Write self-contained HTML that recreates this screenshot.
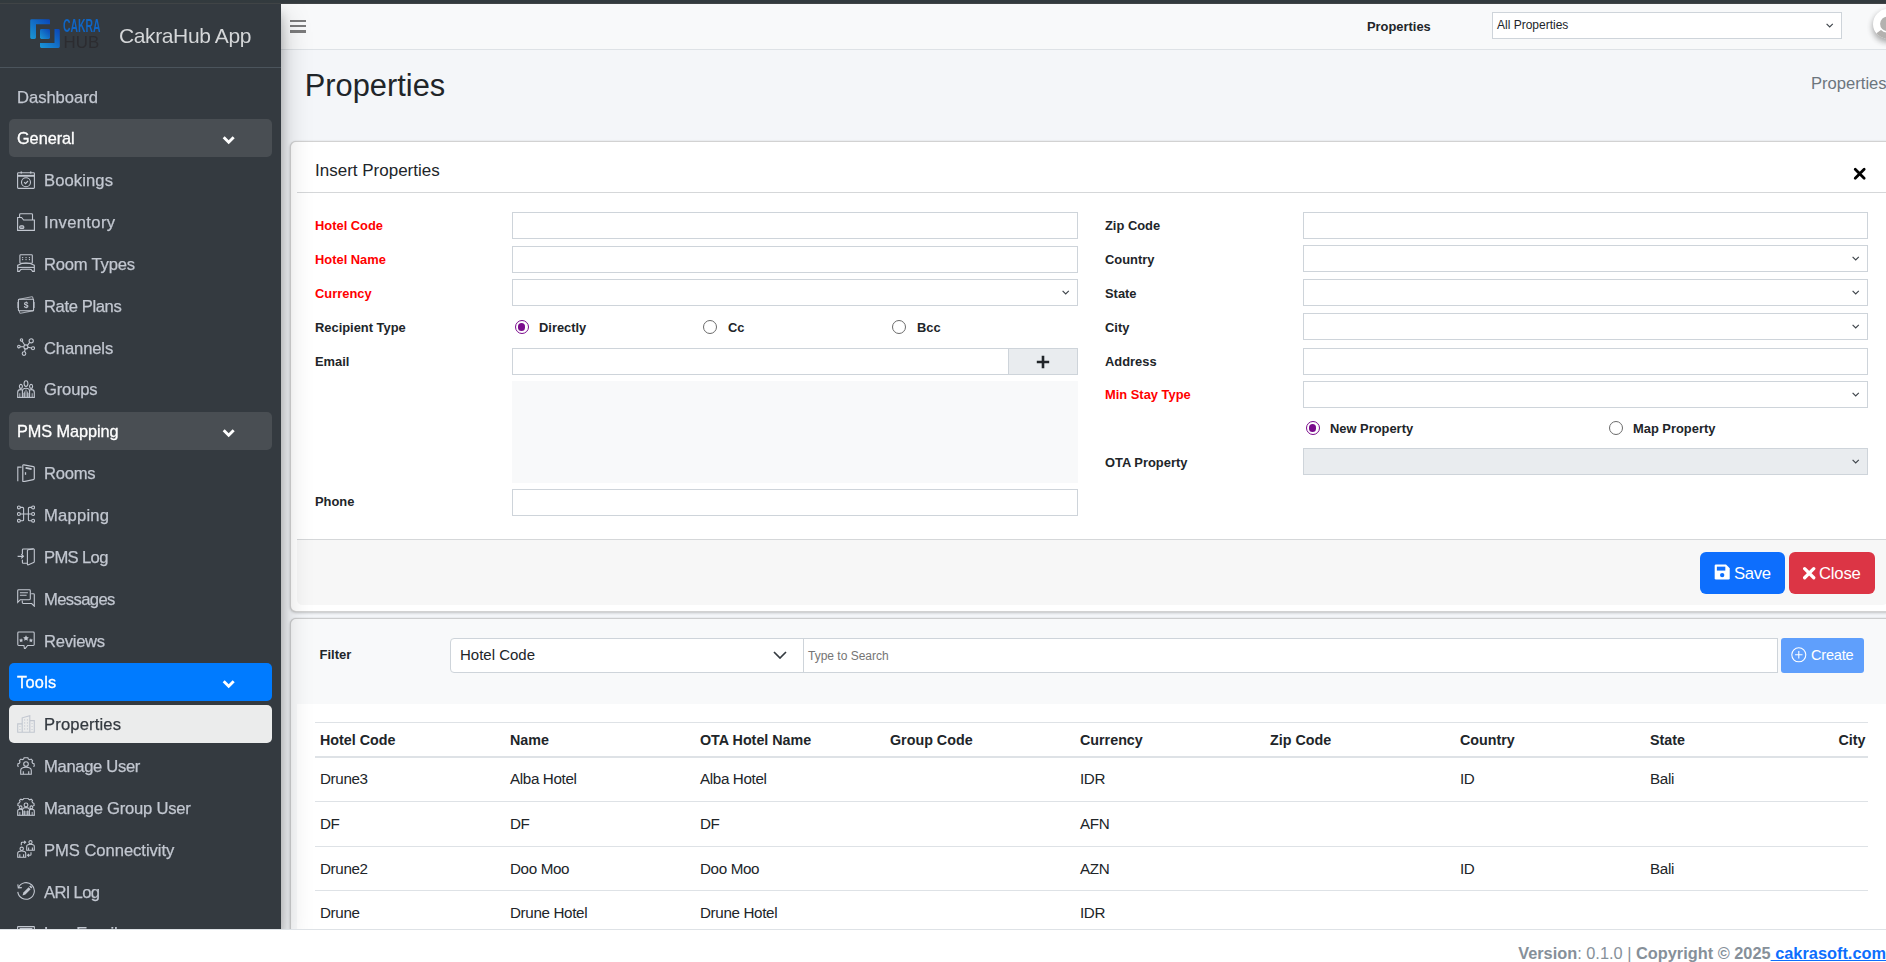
<!DOCTYPE html>
<html lang="en">
<head>
<meta charset="utf-8">
<title>CakraHub App - Properties</title>
<style>
*{box-sizing:border-box;margin:0;padding:0}
html,body{width:1886px;height:962px;overflow:hidden}
body{position:relative;background:#f4f6f9;font-family:"Liberation Sans",sans-serif;color:#212529;font-size:14.8px}
#wrap{position:absolute;left:0;top:0;width:1886px;height:962px;overflow:hidden;background:#f4f6f9}
.abs{position:absolute}
.topbar{position:absolute;left:0;top:0;width:1886px;height:4px;background:linear-gradient(#323a3e 0,#333a3e 65%,#474a4b 100%);z-index:50}
/* sidebar */
.sidebar{position:absolute;left:0;top:4px;width:281px;height:925px;background:#343a40;z-index:20;overflow:hidden;will-change:transform}
.sideshadow{position:absolute;left:0;top:4px;width:281px;height:925px;z-index:19;box-shadow:0 14px 28px rgba(0,0,0,.25),0 10px 10px rgba(0,0,0,.22)}
.brand{position:absolute;left:0;top:0;width:281px;height:64px;border-bottom:1px solid #4b545c}
.brand .logo{position:absolute;left:24px;top:6px}
.brand .txt{position:absolute;left:119px;top:20px;font-size:21px;line-height:24px;color:#d4d6d8;white-space:nowrap;font-weight:400;letter-spacing:-0.38px}
.nav a{position:absolute;left:9px;width:263px;height:37.85px;border-radius:5px;color:#c2c7d0;font-size:16.6px;line-height:37.85px;white-space:nowrap;text-decoration:none;display:block}
.nav a span{position:absolute;left:35px;top:1.4px;-webkit-text-stroke:0.25px currentColor}
.nav a.h span{left:8px;color:#fff;font-size:16.3px;-webkit-text-stroke:0.3px #fff}
.nav a.d span{left:8px}
.nav a.h{background:#494e53}
.nav a.t{background:#007bff}
.nav a.act{background:#ebecec;color:#343a40}
.nav a svg.ic{position:absolute;left:8px;top:10px;width:18px;height:18px;fill:none;stroke:#c2c7d0;stroke-width:1.1}
.nav a svg.ch{position:absolute;left:213.3px;top:15.8px;width:13.4px;height:10px}
/* navbar */
.navbar{position:absolute;left:281px;top:4px;width:1605px;height:46px;background:#f8f9fa;border-bottom:1px solid #dee2e6;z-index:5}
.lbl{position:absolute;font-weight:bold;font-size:12.9px;line-height:16px;margin-top:1px;white-space:nowrap;color:#212529}
.lbl.r{color:#ff0000}
.inp{position:absolute;height:27px;background:#fff;border:1px solid #ced4da}
.inp.dis{background:#e9ecef}
.inp svg{position:absolute;right:7.5px;top:10.2px;width:7.4px;height:5px}
.radio{position:absolute;width:14px;height:14px;border-radius:50%;border:1px solid #6b6b6b;background:#fff;margin:-0.7px 0 0 -0.9px}
.radio.on{border:1.7px solid #7a0a8c}
.radio.on:after{content:"";position:absolute;left:1.4px;top:1.4px;width:7.8px;height:7.8px;border-radius:50%;background:#7a0a8c}
/* cards */
.card1{position:absolute;left:290px;top:141px;width:1640px;height:471px;background:#fff;border:1px solid rgba(0,0,0,.175);border-radius:6px;box-shadow:0 0 1px rgba(0,0,0,.125),0 1px 3px rgba(0,0,0,.2)}
.card2{position:absolute;left:290px;top:618px;width:1640px;height:400px;background:#f8f9fa;border:1px solid rgba(0,0,0,.175);border-radius:6px;box-shadow:0 0 1px rgba(0,0,0,.125),0 1px 3px rgba(0,0,0,.2)}
.footer{position:absolute;left:0;top:929px;width:1886px;height:33px;background:#fff;border-top:1px solid #dee2e6;z-index:30;color:#869099;font-size:16.35px;line-height:20px;text-align:right;white-space:nowrap}
.footer .in{position:absolute;right:0;top:13px}
.footer a{color:#0d6efd;font-weight:bold;text-decoration:underline}
table{border-collapse:collapse}
.seltxt{position:absolute;left:4px;top:4px;font-size:12px;line-height:16px;color:#212529;white-space:nowrap}
.avatar{position:absolute;left:1592px;top:5px;width:30px;height:30px;border-radius:50%;background:#fff;box-shadow:0 3px 6px rgba(0,0,0,.16),0 3px 6px rgba(0,0,0,.23);overflow:hidden}
.avatar svg{position:absolute;left:0;top:0;width:30px;height:30px}
.ptitle{position:absolute;left:304.8px;top:68.4px;font-size:30.8px;line-height:36px;font-weight:normal;color:#212529;white-space:nowrap}
.crumb{position:absolute;left:1811px;top:74px;font-size:16.6px;line-height:20px;color:#6c757d;white-space:nowrap}
.c1in{position:absolute;left:6px;top:0;width:1591px;height:463px;background:#fff;border-radius:5.5px;overflow:hidden}
.c1head{position:absolute;left:0;top:0;width:100%;height:51px;border-bottom:1px solid #d5d7d9}
.c1head span{position:absolute;left:18px;top:18.6px;font-size:17px;line-height:20px;color:#212529;white-space:nowrap}
.xclose{position:absolute;left:1556.3px;top:25.3px;width:13.4px;height:13.4px}
.c1foot{position:absolute;left:0;top:397px;width:100%;height:66px;background:#f7f7f7;border-top:1px solid #d5d7d9}
.btn{position:absolute;border-radius:6px;color:#fff;white-space:nowrap}
.btn.save{left:1403px;top:12px;width:85px;height:42px;background:#0d6efd}
.btn.close{left:1492px;top:12px;width:86px;height:42px;background:#dc3545}
.btn.save svg{position:absolute;left:14.3px;top:12px;width:16.4px;height:16.2px}
.btn.close svg{position:absolute;left:12.6px;top:13.6px;width:14.4px;height:14.4px}
.btn.save span{position:absolute;left:34px;top:10.8px;font-size:16.7px;line-height:22px;letter-spacing:-0.35px}
.btn.close span{position:absolute;left:30px;top:10.8px;font-size:16.7px;line-height:22px;letter-spacing:-0.2px}
.form{position:absolute;left:0;top:0;width:0;height:0}
.inp.plus{background:#e9ecef}
.inp.plus svg.pl{position:absolute;left:27px;top:5.5px;width:14px;height:14px;right:auto}
.fsel{position:absolute;left:159px;top:19px;width:354px;height:35px;background:#fff;border:1px solid #ced4da;border-radius:4px 0 0 4px}
.fsel span{position:absolute;left:9px;top:6px;font-size:15px;line-height:20px;color:#212529}
.fsel svg{position:absolute;left:322px;top:12px;width:14px;height:8px}
.fsearch{position:absolute;left:512px;top:19px;width:975px;height:35px;background:#fff;border:1px solid #ced4da}
.fsearch span{position:absolute;left:4px;top:9px;font-size:12px;line-height:16px;color:#757575}
.btn.create{left:1490px;top:19px;width:83px;height:35px;background:#5f9ffc;border-radius:3px}
.btn.create svg{position:absolute;left:10px;top:9.4px;width:15.6px;height:15.6px}
.btn.create span{position:absolute;left:30px;top:7px;font-size:14.6px;line-height:20px;letter-spacing:-0.25px}
.tblwrap{position:absolute;left:6px;top:85px;width:1640px;height:330px;background:#fff}
.tblclip{position:absolute;left:18px;top:18px;width:1553px;height:300px;overflow:hidden}
table{position:absolute;left:0;top:0;width:1710px;table-layout:fixed;border-top:1px solid #dee2e6}
th,td{width:190px;text-align:left;padding:2px 0 0 5px;white-space:nowrap;color:#212529}
th:last-child{padding-left:3.5px}
th{height:34px;font-size:14.3px;font-weight:bold;border-bottom:2px solid #dee2e6}
td{height:44.75px;font-size:15.2px;letter-spacing:-0.35px;padding-top:0;padding-bottom:0.5px;border-bottom:1px solid #dee2e6}

</style>
</head>
<body>
<div id="wrap">
<div class="topbar"></div>
<div class="sideshadow"></div>
<div class="sidebar">
  <div class="brand">
    <svg class="logo" viewBox="24 10 84 48" width="84" height="48">
      <defs><linearGradient id="lg" x1="0" y1="1" x2="1" y2="0"><stop offset="0" stop-color="#1b97d4"/><stop offset="1" stop-color="#0a45b8"/></linearGradient></defs>
      <path d="M31.7 19.2H48.6Q50 19.2 50 20.6V24.2H36V37.6Q36 39 34.6 39H31.7Q30.2 39 30.2 37.6V20.6Q30.2 19.2 31.7 19.2Z" fill="url(#lg)"/>
      <rect x="40" y="29" width="10" height="10" rx="1.4" fill="url(#lg)"/>
      <path d="M54.5 29H58.3Q59.8 29 59.8 30.4V46.6Q59.8 48 58.3 48H41.4Q40 48 40 46.6V43H54.5Z" fill="url(#lg)"/>
      <text x="63" y="32" font-family="Liberation Sans, sans-serif" font-weight="bold" font-size="17.8" fill="#0f65c4" textLength="37.4" lengthAdjust="spacingAndGlyphs">CAKRA</text>
      <text x="63.6" y="47.7" font-family="Liberation Sans, sans-serif" font-size="17.4" fill="#2c2c30" textLength="35.6" lengthAdjust="spacingAndGlyphs">HUB</text>
    </svg>
    <div class="txt">CakraHub App</div>
  </div>
  <div class="nav">
<a class="d" style="top:73.15px"><span style="letter-spacing:-0.03px">Dashboard</span></a>
<a class="h" style="top:115.0px"><span style="letter-spacing:-0.04px">General</span><svg class="ch" viewBox="0 0 12 9"><path d="M1.5 2L6 6.5L10.5 2" fill="none" stroke="#fff" stroke-width="2.6"/></svg></a>
<a class="" style="top:156.85px"><svg class="ic" style="top:10.15px" viewBox="0 0 18 18"><rect x="0.6" y="1.7" width="16.8" height="15.7" rx="0.8"/><path d="M0.6 4.8H17.4" stroke-width="1.9"/><path d="M4.3 0.4V2.6M13.7 0.4V2.6" stroke-width="1.5"/><circle cx="9" cy="11.2" r="4.5"/><path d="M7.1 11.2l1.4 1.4 2.5-2.6" stroke-width="1.2"/></svg><span style="letter-spacing:0.1px">Bookings</span></a>
<a class="" style="top:198.69px"><svg class="ic" style="top:10.31px" viewBox="0 0 18 18"><path d="M0.6 17.4V4.5H4.6L6.6 7H17.4V17.4Z"/><path d="M2.6 4.5V1.7Q2.6 0.8 3.5 0.8H14.6Q15.5 0.8 15.5 1.7V7"/><rect x="2.6" y="12.8" width="4.3" height="2.7" rx="1.35" fill="#c2c7d0" fill-opacity="0.55"/></svg><span style="letter-spacing:0.35px">Inventory</span></a>
<a class="" style="top:240.54px"><svg class="ic" style="top:9.46px" viewBox="0 0 18 18"><rect x="2.9" y="0.7" width="12.4" height="8.6" rx="0.8"/><path d="M0.7 17.4V11.3Q9 6.8 17.3 11.3V17.4H15.6Q14.6 15.3 13 15.3H5Q3.4 15.3 2.4 17.4Z"/><path d="M0.7 13.4H17.3"/><path d="M5.6 3.6h0.1M9 3.6h0.1M12.4 3.6h0.1M5.6 5.6h0.1M9 5.6h0.1M12.4 5.6h0.1" stroke-width="1.3" stroke-linecap="round"/></svg><span style="letter-spacing:-0.2px">Room Types</span></a>
<a class="" style="top:282.38px"><svg class="ic" style="top:9.62px" viewBox="0 0 18 18"><path d="M2.2 3.2L14.8 0.8Q15.5 0.7 15.7 1.4L16.2 3.2M16.6 14.6L3.6 17.2Q2.9 17.3 2.7 16.6L2.2 14.8" opacity="0.8"/><rect x="1.4" y="3.3" width="15.2" height="11.4" rx="0.8"/><path d="M0.7 6v6M17.4 6v6" opacity="0.6"/><text x="9" y="12.3" text-anchor="middle" font-family="Liberation Sans, sans-serif" font-size="8.5" font-weight="bold" fill="#c2c7d0" stroke="none">$</text></svg><span style="letter-spacing:-0.38px">Rate Plans</span></a>
<a class="" style="top:324.23px"><svg class="ic" style="top:9.77px" viewBox="0 0 18 18"><circle cx="8.9" cy="8.9" r="2"/><circle cx="4.5" cy="1.9" r="1.2"/><circle cx="14.2" cy="2.8" r="2.1"/><circle cx="1.9" cy="8.6" r="1.3"/><circle cx="16" cy="10.2" r="1.5"/><circle cx="7" cy="15.6" r="1.8"/><path d="M5.1 3L7.8 7.2M12.7 4.4L10.4 7.4M3.2 8.7H6.9M10.9 9.3L14.5 10M8.2 10.8L7.5 13.8"/></svg><span style="letter-spacing:-0.13px">Channels</span></a>
<a class="" style="top:366.08px"><svg class="ic" style="top:9.92px" viewBox="0 0 18 18"><path d="M5.4 17.4V11.2Q5.4 8.2 9 8.2Q12.6 8.2 12.6 11.2V17.4"/><ellipse cx="9" cy="3.6" rx="1.9" ry="2.8"/><path d="M0.7 17.4V12.3Q0.7 9.6 3.6 9.6Q4.6 9.6 5.2 10M17.3 17.4V12.3Q17.3 9.6 14.4 9.6Q13.4 9.6 12.8 10"/><ellipse cx="3.9" cy="6.4" rx="1.5" ry="2"/><ellipse cx="14.1" cy="6.4" rx="1.5" ry="2"/><path d="M0.2 17.4H17.8"/><path d="M2.8 13.3V17M15.2 13.3V17M7.4 11.5V17M10.6 11.5V17M9 9.5V13" opacity="0.8"/><path d="M6 13h6v4H6z" fill="#c2c7d0" opacity="0.45" stroke="none"/></svg><span style="letter-spacing:-0.16px">Groups</span></a>
<a class="h" style="top:407.92px"><span style="letter-spacing:-0.07px">PMS Mapping</span><svg class="ch" viewBox="0 0 12 9"><path d="M1.5 2L6 6.5L10.5 2" fill="none" stroke="#fff" stroke-width="2.6"/></svg></a>
<a class="" style="top:449.77px"><svg class="ic" style="top:10.23px" viewBox="0 0 18 18"><path d="M0.8 17.3V3.1H4.6"/><path d="M5.8 16.9V1.6Q5.8 0.6 6.9 0.8L16.4 2.6Q17.3 2.8 17.3 3.7V14.6Q17.3 15.4 16.4 15.6L6.9 17.6Q5.8 17.8 5.8 16.9Z" stroke-width="1.2"/><path d="M8.6 3.9L14.6 5.1" stroke-width="1.6"/><path d="M8.5 8.2V10.8" stroke-width="1.3"/></svg><span style="letter-spacing:-0.24px">Rooms</span></a>
<a class="" style="top:491.61px"><svg class="ic" style="top:9.39px" viewBox="0 0 18 18"><circle cx="1.9" cy="2.4" r="1.45"/><circle cx="1.9" cy="9" r="1.45"/><circle cx="1.9" cy="15.7" r="1.45"/><circle cx="16.1" cy="2.4" r="1.45"/><circle cx="16.1" cy="9" r="1.45"/><circle cx="16.1" cy="15.7" r="1.45"/><path d="M3.2 2.4H5.6Q6.6 2.4 6.6 3.4V14.7Q6.6 15.7 5.6 15.7H3.2M14.8 2.4H12.4Q11.4 2.4 11.4 3.4V14.7Q11.4 15.7 12.4 15.7H14.8M3.2 9H14.8"/></svg><span style="letter-spacing:0.22px">Mapping</span></a>
<a class="" style="top:533.46px"><svg class="ic" style="top:10.14px" viewBox="0 0 18 18"><path d="M10.2 15.3H6.3Q5.4 15.3 5.4 14.4V11.8M5.4 6.2V1.9Q5.4 1 6.3 1H16.2"/><path d="M10.4 2.6Q10.4 1.9 11.1 1.7L16.3 0.9Q17.3 0.8 17.3 1.8V13.6Q17.3 14.3 16.6 14.6L11.5 16.8Q10.4 17.2 10.4 16.1Z"/><path d="M0.6 8.3H6.4M4.3 6.2L6.4 8.3L4.3 10.4" stroke-width="1.2"/></svg><span style="letter-spacing:-0.65px">PMS Log</span></a>
<a class="" style="top:575.31px"><svg class="ic" style="top:9.69px" viewBox="0 0 18 18"><path d="M0.7 13.3V1.7Q0.7 0.8 1.6 0.8H12.4Q13.3 0.8 13.3 1.7V9.8Q13.3 10.7 12.4 10.7H3.3Z"/><path d="M5.3 11.5V13.6Q5.3 14.5 6.2 14.5H14.7L17.3 17.2V5.6Q17.3 4.7 16.4 4.7H14.2"/><path d="M2.9 3.7H10.9M2.9 6.2H9.6"/></svg><span style="letter-spacing:-0.62px">Messages</span></a>
<a class="" style="top:617.15px"><svg class="ic" style="top:9.55px" viewBox="0 0 18 18"><path d="M0.8 1.9Q0.8 1 1.7 1H16.3Q17.2 1 17.2 1.9V13.6Q17.2 14.5 16.3 14.5H10.6L7.6 18.3L6.9 14.5H1.7Q0.8 14.5 0.8 13.6Z"/><path d="M9 4.3l0.9 1.8 2 0.3-1.45 1.4 0.35 2-1.8-0.95-1.8 0.95 0.35-2-1.45-1.4 2-0.3z" fill="#c2c7d0" stroke="none"/><path d="M4.1 7.2l0.65 1.3 1.45 0.2-1.05 1 0.25 1.45-1.3-0.7-1.3 0.7 0.25-1.45-1.05-1 1.45-0.2z" fill="#c2c7d0" stroke="none"/><path d="M13.9 7.2l0.65 1.3 1.45 0.2-1.05 1 0.25 1.45-1.3-0.7-1.3 0.7 0.25-1.45-1.05-1 1.45-0.2z" fill="#c2c7d0" stroke="none"/></svg><span style="letter-spacing:-0.26px">Reviews</span></a>
<a class="h t" style="top:659.0px"><span style="letter-spacing:0.31px">Tools</span><svg class="ch" viewBox="0 0 12 9"><path d="M1.5 2L6 6.5L10.5 2" fill="none" stroke="#fff" stroke-width="2.6"/></svg></a>
<a class="act" style="top:700.84px"><svg class="ic" style="top:10.16px" viewBox="0 0 18 18"><path d="M5.2 17.3V2.8L12.8 0.7V17.3M0.7 17.3V8.9H5.2M12.8 5.6H17.3V17.3M0.2 17.3H17.8"/><path d="M7.6 4.9h0.1M10.4 4.9h0.1M7.6 7.9h0.1M10.4 7.9h0.1M7.6 10.9h0.1M10.4 10.9h0.1M7.6 13.9h0.1M10.4 13.9h0.1M15 8.5h0.1M15 11.5h0.1M15 14.5h0.1M2.9 11.5h0.1M2.9 14.5h0.1" stroke-width="1.1" stroke-linecap="round"/></svg><span style="letter-spacing:0.15px">Properties</span></a>
<a class="" style="top:742.69px"><svg class="ic" style="top:10.31px" viewBox="0 0 18 18"><path d="M3.7 17.3V13.4Q3.7 10.2 9 10.2Q14.3 10.2 14.3 13.4V17.3Z"/><path d="M6.3 14.2V17M11.7 14.2V17"/><circle cx="9" cy="7.1" r="2.3"/><path d="M1.6 9.6L0.7 8.9 1 6.7 2.4 6.3 3 4.9 2.4 3.6 3.9 2.1 5.2 2.7 6.6 2.1 7.1 0.7H10.9L11.4 2.1 12.8 2.7 14.1 2.1 15.6 3.6 15 4.9 15.6 6.3 17 6.7 17.3 8.9 16.4 9.6"/></svg><span style="letter-spacing:-0.33px">Manage User</span></a>
<a class="" style="top:784.54px"><svg class="ic" style="top:9.46px" viewBox="0 0 18 18"><path d="M5.6 17.3V11.6Q5.6 9.6 9 9.6Q12.4 9.6 12.4 11.6V17.3"/><circle cx="9" cy="6.9" r="1.9"/><path d="M0.7 17.3V12.9Q0.7 11.2 3.2 11.2Q4.8 11.2 5.4 11.8M17.3 17.3V12.9Q17.3 11.2 14.8 11.2Q13.2 11.2 12.6 11.8"/><circle cx="3.6" cy="9.3" r="1.4"/><circle cx="14.4" cy="9.3" r="1.4"/><path d="M0.2 17.3H17.8"/><path d="M2.8 14V17M15.2 14V17M7.4 12.5V17M10.6 12.5V17" opacity="0.8"/><path d="M6 13h6v4H6z" fill="#c2c7d0" opacity="0.45" stroke="none"/><path d="M1.7 8L0.8 7.2 1.1 5.3 2.4 4.9 3 3.6 2.5 2.5 3.9 1.2 5.2 1.8 6.5 1.2 7 0.3H11L11.5 1.2 12.8 1.8 14.1 1.2 15.5 2.5 15 3.6 15.6 4.9 16.9 5.3 17.2 7.2 16.3 8"/></svg><span style="letter-spacing:-0.22px">Manage Group User</span></a>
<a class="" style="top:826.38px"><svg class="ic" style="top:9.62px" viewBox="0 0 18 18"><path d="M0.7 17.3V13.3Q0.7 11 4.7 11Q8.7 11 8.7 13.3V17.3Z"/><circle cx="4.7" cy="8.8" r="1.7"/><path d="M2.8 14.3V17M6.6 14.3V17"/><path d="M9.7 10.3V6.4Q9.7 4.3 13.5 4.3Q17.3 4.3 17.3 6.4V10.3Z"/><circle cx="13.5" cy="2.2" r="1.6"/><path d="M11.6 7.4V10M15.4 7.4V10"/><path d="M4.3 5.3V3.2Q4.3 2.3 5.2 2.3H8.6M7.2 0.9L8.7 2.3L7.2 3.7M14 12.3V14.4Q14 15.3 13.1 15.3H10.6M12 13.9L10.5 15.3L12 16.7"/></svg><span style="letter-spacing:-0.04px">PMS Connectivity</span></a>
<a class="" style="top:868.23px"><svg class="ic" style="top:9.77px" viewBox="0 0 18 18"><path d="M1.5 5.5A8.3 8.3 0 1 1 0.8 9.9" /><path d="M0.8 2.4L1.3 5.9L4.8 5.6"/><path d="M5.5 13.6L6.4 10.4L11.6 5.2L13.6 7.2L8.4 12.4Z" fill="#c2c7d0" stroke="none"/><path d="M12.2 4.6L13 3.8Q13.4 3.4 13.8 3.8L15 5Q15.4 5.4 15 5.8L14.2 6.6Z" fill="#c2c7d0" stroke="none"/></svg><span style="letter-spacing:-0.67px">ARI Log</span></a>
<a class="" style="top:910.07px"><svg class="ic" style="top:11.93px" viewBox="0 0 18 18"><rect x="0.6" y="0.6" width="16.8" height="14" rx="0.5"/><path d="M2.6 2.7H15.4" stroke-width="1.6"/></svg><span>Log Email</span></a>

  </div>
</div>
<div class="navbar">
  <div class="abs" style="left:9px;top:15.6px;width:16px;height:2.5px;background:#7b7b7c"></div>
  <div class="abs" style="left:9px;top:20.8px;width:16px;height:2.5px;background:#7b7b7c"></div>
  <div class="abs" style="left:9px;top:26px;width:16px;height:2.5px;background:#7b7b7c"></div>
  <div class="lbl" style="left:1086px;top:14px">Properties</div>
  <div class="inp" style="left:1211px;top:8px;width:350px;height:27px"><span class="seltxt">All Properties</span><svg viewBox="0 0 7.4 5"><path d="M0.6 0.9L3.7 4L6.8 0.9" fill="none" stroke="#3f454b" stroke-width="1.15"/></svg></div>
  <div class="avatar"><svg viewBox="1873 9 30 30"><circle cx="1888.5" cy="44" r="16" fill="#b3b1af"/><circle cx="1887.3" cy="23.9" r="8.8" fill="#fff"/><circle cx="1887.3" cy="23.9" r="7.2" fill="#b3b1af"/></svg></div>
</div>
<h1 class="ptitle">Properties</h1>
<div class="crumb">Properties</div>

<div class="card1">
  <div class="c1in">
    <div class="c1head"><span>Insert Properties</span>
      <svg class="xclose" viewBox="0 0 12 12"><path d="M2 2L10 10M10 2L2 10" stroke="#000" stroke-width="2.5" stroke-linecap="round" fill="none"/></svg>
    </div>
    <div class="c1foot">
      <div class="btn save"><svg viewBox="0 0 14 14"><path d="M1.6 0.5H10.3L13.5 3.7V12.4Q13.5 13.5 12.4 13.5H1.6Q0.5 13.5 0.5 12.4V1.6Q0.5 0.5 1.6 0.5Z" fill="#fff"/><rect x="2.4" y="2.3" width="7.3" height="3.4" fill="#0d6efd"/><circle cx="7" cy="9.6" r="1.9" fill="#0d6efd"/></svg><span>Save</span></div>
      <div class="btn close"><svg viewBox="0 0 12 12"><path d="M2.2 2.2L9.8 9.8M9.8 2.2L2.2 9.8" stroke="#fff" stroke-width="2.7" stroke-linecap="round" fill="none"/></svg><span>Close</span></div>
    </div>
  </div>
</div>
<!-- form (absolute page coords) -->
<div class="form">
  <div class="lbl r" style="left:315px;top:217px">Hotel Code</div>
  <div class="lbl r" style="left:315px;top:251px">Hotel Name</div>
  <div class="lbl r" style="left:315px;top:285px">Currency</div>
  <div class="lbl" style="left:315px;top:319px">Recipient Type</div>
  <div class="lbl" style="left:315px;top:353px">Email</div>
  <div class="lbl" style="left:315px;top:493px">Phone</div>
  <div class="inp" style="left:512px;top:212px;width:566px"></div>
  <div class="inp" style="left:512px;top:246px;width:566px"></div>
  <div class="inp" style="left:512px;top:279px;width:566px"><svg viewBox="0 0 7.4 5"><path d="M0.6 0.9L3.7 4L6.8 0.9" fill="none" stroke="#3f454b" stroke-width="1.15"/></svg></div>
  <div class="radio on" style="left:516px;top:321px"></div><div class="lbl" style="left:539px;top:319px">Directly</div>
  <div class="radio" style="left:704px;top:321px"></div><div class="lbl" style="left:728px;top:319px">Cc</div>
  <div class="radio" style="left:893px;top:321px"></div><div class="lbl" style="left:917px;top:319px">Bcc</div>
  <div class="inp" style="left:512px;top:348px;width:497px"></div>
  <div class="inp plus" style="left:1008px;top:348px;width:70px"><svg class="pl" viewBox="0 0 14 14"><path d="M7 0.8V13.2M0.8 7H13.2" stroke="#212529" stroke-width="2.6" fill="none"/></svg></div>
  <div class="abs" style="left:512px;top:381px;width:566px;height:102px;background:#f8f9fa"></div>
  <div class="inp" style="left:512px;top:489px;width:566px"></div>

  <div class="lbl" style="left:1105px;top:217px">Zip Code</div>
  <div class="lbl" style="left:1105px;top:251px">Country</div>
  <div class="lbl" style="left:1105px;top:285px">State</div>
  <div class="lbl" style="left:1105px;top:319px">City</div>
  <div class="lbl" style="left:1105px;top:353px">Address</div>
  <div class="lbl r" style="left:1105px;top:386px">Min Stay Type</div>
  <div class="lbl" style="left:1105px;top:454px">OTA Property</div>
  <div class="inp" style="left:1303px;top:212px;width:565px"></div>
  <div class="inp" style="left:1303px;top:245px;width:565px"><svg viewBox="0 0 7.4 5"><path d="M0.6 0.9L3.7 4L6.8 0.9" fill="none" stroke="#3f454b" stroke-width="1.15"/></svg></div>
  <div class="inp" style="left:1303px;top:279px;width:565px"><svg viewBox="0 0 7.4 5"><path d="M0.6 0.9L3.7 4L6.8 0.9" fill="none" stroke="#3f454b" stroke-width="1.15"/></svg></div>
  <div class="inp" style="left:1303px;top:313px;width:565px"><svg viewBox="0 0 7.4 5"><path d="M0.6 0.9L3.7 4L6.8 0.9" fill="none" stroke="#3f454b" stroke-width="1.15"/></svg></div>
  <div class="inp" style="left:1303px;top:348px;width:565px"></div>
  <div class="inp" style="left:1303px;top:381px;width:565px"><svg viewBox="0 0 7.4 5"><path d="M0.6 0.9L3.7 4L6.8 0.9" fill="none" stroke="#3f454b" stroke-width="1.15"/></svg></div>
  <div class="radio on" style="left:1307px;top:422px"></div><div class="lbl" style="left:1330px;top:420px">New Property</div>
  <div class="radio" style="left:1610px;top:422px"></div><div class="lbl" style="left:1633px;top:420px">Map Property</div>
  <div class="inp dis" style="left:1303px;top:448px;width:565px"><svg viewBox="0 0 7.4 5"><path d="M0.6 0.9L3.7 4L6.8 0.9" fill="none" stroke="#3f454b" stroke-width="1.15"/></svg></div>
</div>

<div class="card2">
  <div class="lbl" style="left:28.5px;top:27px;font-size:13px">Filter</div>
  <div class="fsel"><span>Hotel Code</span><svg viewBox="0 0 14 8"><path d="M1 1L7 7L13 1" fill="none" stroke="#343a40" stroke-width="1.7"/></svg></div>
  <div class="fsearch"><span>Type to Search</span></div>
  <div class="btn create"><svg viewBox="0 0 16 16"><circle cx="8" cy="8" r="7.2" fill="none" stroke="#fff" stroke-width="1.1"/><path d="M8 4.2V11.8M4.2 8H11.8" stroke="#fff" stroke-width="1.1"/></svg><span>Create</span></div>
  <div class="tblwrap"><div class="tblclip">
    <table>
      <thead><tr><th>Hotel Code</th><th>Name</th><th>OTA Hotel Name</th><th>Group Code</th><th>Currency</th><th>Zip Code</th><th>Country</th><th>State</th><th>City</th></tr></thead>
      <tbody>
        <tr><td>Drune3</td><td>Alba Hotel</td><td>Alba Hotel</td><td></td><td>IDR</td><td></td><td>ID</td><td>Bali</td><td></td></tr>
        <tr><td>DF</td><td>DF</td><td>DF</td><td></td><td>AFN</td><td></td><td></td><td></td><td></td></tr>
        <tr><td>Drune2</td><td>Doo Moo</td><td>Doo Moo</td><td></td><td>AZN</td><td></td><td>ID</td><td>Bali</td><td></td></tr>
        <tr><td>Drune</td><td>Drune Hotel</td><td>Drune Hotel</td><td></td><td>IDR</td><td></td><td></td><td></td><td></td></tr>
        <tr><td>Drune4</td><td>Drune Inn</td><td>Drune Inn</td><td></td><td>IDR</td><td></td><td></td><td></td><td></td></tr>
      </tbody>
    </table>
  </div></div>
</div>

<div class="footer"><div class="in"><b>Version</b>: 0.1.0 | <b>Copyright © 2025</b><a> cakrasoft.com</a></div></div>
</div>
</body>
</html>
